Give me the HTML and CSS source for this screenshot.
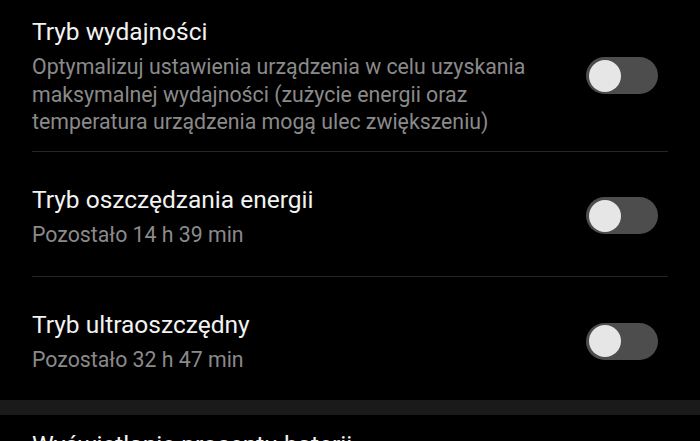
FILE: index.html
```html
<!DOCTYPE html>
<html lang="pl">
<head>
    <meta charset="UTF-8">
    <meta name="viewport" content="width=device-width, initial-scale=1.0">
    <title>Bateria</title>
    <link rel="stylesheet" href="styles.css">
</head>
<body>
    <ul class="settings">
        <li class="row row-first">
            <div class="text">
                <p class="title">Tryb wydajności</p>
                <p class="summary">Optymalizuj ustawienia urządzenia w celu uzyskania<br>maksymalnej wydajności (zużycie energii oraz<br>temperatura urządzenia mogą ulec zwiększeniu)</p>
            </div>
            <span class="switch"><span class="knob"></span></span>
        </li>
        <li class="row">
            <div class="text">
                <p class="title">Tryb oszczędzania energii</p>
                <p class="summary">Pozostało 14 h 39 min</p>
            </div>
            <span class="switch"><span class="knob"></span></span>
        </li>
        <li class="row row-last">
            <div class="text">
                <p class="title">Tryb ultraoszczędny</p>
                <p class="summary">Pozostało 32 h 47 min</p>
            </div>
            <span class="switch"><span class="knob"></span></span>
        </li>
    </ul>

    <div class="group-gap"></div>

    <ul class="settings">
        <li class="row row-next">
            <div class="text">
                <p class="title">Wyświetlanie procentu baterii</p>
            </div>
        </li>
    </ul>
</body>
</html>
```

FILE: styles.css
```css
/* General */
body {
    margin: 0;
    padding: 0;
    background-color: #000;
    font-family: Roboto, "Noto Sans", sans-serif;
    overflow: hidden;
}

/* Settings list */
.settings {
    list-style: none;
    margin: 0;
    padding: 0 32px;
}

.row {
    display: flex;
    align-items: center;
    justify-content: space-between;
    padding: 32px 10px 28px 0;
    border-bottom: 1px solid #262626;
}

.row-first {
    padding-top: 16px;
    padding-bottom: 15px;
}

.row-last {
    border-bottom: none;
    padding-bottom: 26px;
}

.row-next {
    padding-top: 14px;
}

.text p {
    margin: 0;
}

.title {
    color: #f2f2f2;
    font-size: 24.5px;
    line-height: 32px;
}

.summary {
    color: #8a8a8a;
    font-size: 21.3px;
    line-height: 27.5px;
    margin-top: 5px !important;
}

/* Toggle switch (off state) */
.switch {
    display: flex;
    align-items: center;
    width: 72px;
    height: 37px;
    padding: 0 3px;
    box-sizing: border-box;
    background-color: #4d4d4d;
    border-radius: 19px;
    flex-shrink: 0;
}

.knob {
    width: 32px;
    height: 32px;
    border-radius: 50%;
    background-color: #e6e6e6;
}

/* Gap between groups */
.group-gap {
    height: 15px;
    background-color: #1a1a1a;
}
```
